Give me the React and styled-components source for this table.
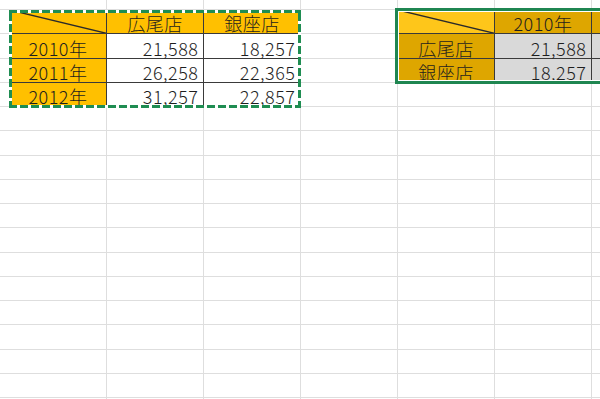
import React from 'react';
import styled, { createGlobalStyle } from 'styled-components';

const COL_W = 97;
const ROW_H = 24.25;

const GlobalStyle = createGlobalStyle`
  html, body {
    margin: 0;
    padding: 0;
    background: #fff;
    overflow: hidden;
  }
`;

const Sheet = styled.div`
  display: grid;
  grid-template-columns: 10px repeat(7, ${COL_W}px);
  grid-template-rows: 10px repeat(17, ${ROW_H}px);
  width: 600px;
  height: 399px;
  overflow: hidden;
  font-family: 'Noto Sans CJK JP', 'Noto Sans', sans-serif;
  font-weight: 300;
  font-size: 18px;
  letter-spacing: 0.5px;
  color: #1e1e1e;
`;

const fills = {
  none: '#fff',
  gold: '#ffc000',
  active: '#fec61a',
  picked: '#dea600',
  grey: '#d9d9d9',
};

const Cell = styled.div`
  grid-row: ${(p) => p.$r};
  grid-column: ${(p) => p.$c};
  position: relative;
  box-sizing: border-box;
  display: flex;
  align-items: flex-end;
  justify-content: ${(p) => (p.$align === 'right' ? 'flex-end' : 'center')};
  padding: 0 ${(p) => (p.$align === 'right' ? '4.5px' : '5px')} 0 5px;
  line-height: 20px;
  white-space: nowrap;
  background: ${(p) => fills[p.$fill || 'none']};
  border-right: 1px solid ${(p) => (p.$dark ? '#3a3a3a' : '#dedede')};
  border-bottom: 1px solid ${(p) => (p.$dark ? '#3a3a3a' : '#dedede')};
`;

const Slash = styled.svg`
  position: absolute;
  inset: 0;
  width: 100%;
  height: 100%;
`;

const Marquee = styled.div`
  grid-row: 2 / 6;
  grid-column: 2 / 5;
  margin: 0 0 -1px -1px;
  pointer-events: none;
  z-index: 2;
  background-image:
    linear-gradient(90deg, #1f8d52 8px, #fff 8px),
    linear-gradient(90deg, #1f8d52 8px, #fff 8px),
    linear-gradient(0deg, #1f8d52 8px, #fff 8px),
    linear-gradient(0deg, #1f8d52 8px, #fff 8px);
  background-size: 11px 3px, 11px 3px, 3px 11px, 3px 11px;
  background-position: 0 0, 0 100%, 0 0, 100% 0;
  background-repeat: repeat-x, repeat-x, repeat-y, repeat-y;
`;

const Selection = styled.div`
  grid-row: 2 / 5;
  grid-column: 6 / 9;
  position: relative;
  pointer-events: none;
  z-index: 2;
`;

const SelectionFrame = styled.div`
  position: absolute;
  inset: -2px -3px -1px -3px;
  border: 3px solid #1f8651;
  box-shadow: inset 0 0 0 1px #fff;
`;

const Diagonal = () => (
  <Slash viewBox="0 0 100 100" preserveAspectRatio="none">
    <line x1="0" y1="0" x2="100" y2="100" stroke="#2a2a2a" strokeWidth="1.3" vectorEffect="non-scaling-stroke" />
  </Slash>
);

// left block: copied range, right block: pasted (transposed) and selected
const leftTable = [
  [null, '広尾店', '銀座店'],
  ['2010年', '21,588', '18,257'],
  ['2011年', '26,258', '22,365'],
  ['2012年', '31,257', '22,857'],
];

// third column runs off the right edge of the window, so it shows no text
const rightTable = [
  [null, '2010年', null],
  ['広尾店', '21,588', null],
  ['銀座店', '18,257', null],
];

const ROWS = 18;
const COLS = 8;

const lookup = (r, c) => {
  if (r >= 2 && r <= 5 && c >= 2 && c <= 4) {
    const v = leftTable[r - 2][c - 2];
    const head = r === 2 || c === 2;
    return { v, fill: head ? 'gold' : 'none', align: head ? 'center' : 'right', dark: true, slash: r === 2 && c === 2 };
  }
  if (r >= 2 && r <= 4 && c >= 6 && c <= 8) {
    const v = rightTable[r - 2][c - 6];
    const corner = r === 2 && c === 6;
    const head = r === 2 || c === 6;
    return {
      v,
      fill: corner ? 'active' : head ? 'picked' : 'grey',
      align: head ? 'center' : 'right',
      dark: true,
      slash: corner,
    };
  }
  return { v: null, fill: 'none', align: 'center', dark: false, slash: false };
};

const App = () => {
  const cells = [];
  for (let r = 1; r <= ROWS; r++) {
    for (let c = 1; c <= COLS; c++) {
      const cell = lookup(r, c);
      cells.push(
        <Cell key={`${r}-${c}`} $r={r} $c={c} $fill={cell.fill} $align={cell.align} $dark={cell.dark}>
          {cell.slash && <Diagonal />}
          {cell.v}
        </Cell>
      );
    }
  }

  return (
    <>
      <GlobalStyle />
      <Sheet>
        {cells}
        <Marquee />
        <Selection>
          <SelectionFrame />
        </Selection>
      </Sheet>
    </>
  );
};

export default App;
